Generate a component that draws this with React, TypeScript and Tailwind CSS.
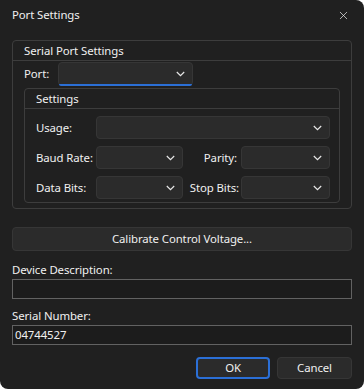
import { X } from "lucide-react";

function Chevron() {
  return (
    <svg width="9" height="6" viewBox="0 0 9 6" className="shrink-0">
      <path d="M0.8 1 L4.5 4.6 L8.2 1" fill="none" stroke="#e8e8e8" strokeWidth="1.2" />
    </svg>
  );
}

function Combo({ className, focused }: { className: string; focused?: boolean }) {
  return (
    <div
      className={
        "relative flex items-center justify-end pr-[7px] rounded-[4px] border border-[#363636] bg-[#2b2b2b] " +
        className
      }
    >
      <Chevron />
      {focused && (
        <div className="absolute left-0 right-0 -bottom-px h-[2px] rounded-b-[4px] bg-[#2b6fd6]" />
      )}
    </div>
  );
}

export default function App() {
  return (
    <div className="w-[364px] h-[389px] bg-white">
      <div
        className="w-[364px] h-[389px] bg-[#202020] rounded-tr-lg rounded-b-lg text-[11.4px] tracking-[-0.1px] text-[#f0f0f0] flex flex-col whitespace-nowrap"
        style={{ fontFamily: '"Noto Sans", "Open Sans", sans-serif' }}
      >
        {/* title bar */}
        <div className="h-[29px] flex items-center justify-between pl-3 pr-[14px] pt-px">
          <span>Port Settings</span>
          <X size={13} strokeWidth={1.3} className="text-[#f0f0f0]" />
        </div>

        <div className="px-3 flex flex-col">
          {/* Serial Port Settings group */}
          <div className="mt-[11px] border border-[#3d3d3d] rounded-[4px] pb-[5px]">
            <div className="h-[20px] border-b border-[#3d3d3d] pl-[11px] flex items-center">
              Serial Port Settings
            </div>
            <div className="flex items-center h-[26px] pl-[11px]">
              <span className="w-[34px] shrink-0">Port:</span>
              <Combo className="w-[135px] h-[24px] shrink-0" focused />
            </div>
            <div className="mt-px mx-[11px] border border-[#3d3d3d] rounded-[4px] pb-[3px]">
              <div className="h-[20px] border-b border-[#3d3d3d] pl-[11px] flex items-center">
                Settings
              </div>
              <div className="flex flex-col gap-[7px] pt-[7px] pl-[11px] pr-[9px]">
                <div className="flex items-center">
                  <span className="w-[60px] shrink-0">Usage:</span>
                  <Combo className="flex-1 h-[23px]" />
                </div>
                <div className="flex items-center">
                  <span className="w-[60px] shrink-0">Baud Rate:</span>
                  <Combo className="w-[87px] h-[23px] shrink-0" />
                  <span className="w-[58px] shrink-0 text-right pr-[4px]">Parity:</span>
                  <Combo className="flex-1 h-[23px]" />
                </div>
                <div className="flex items-center">
                  <span className="w-[60px] shrink-0">Data Bits:</span>
                  <Combo className="w-[87px] h-[23px] shrink-0" />
                  <span className="w-[58px] shrink-0 text-right pr-[2px]">Stop Bits:</span>
                  <Combo className="flex-1 h-[23px]" />
                </div>
              </div>
            </div>
          </div>

          {/* Calibrate */}
          <button className="mt-[18px] h-[24px] rounded-[4px] border border-[#363636] bg-[#2b2b2b] text-[#f0f0f0]">
            Calibrate Control Voltage...
          </button>

          <div className="mt-[11px] h-[16px] leading-[16px]">Device Description:</div>
          <div className="mt-[1px] h-[20px] border border-[#626262] bg-[#1c1c1c]" />

          <div className="mt-[9px] h-[16px] leading-[16px]">Serial Number:</div>
          <div className="mt-[1px] h-[20px] border border-[#626262] bg-[#1c1c1c] flex items-center pl-[2px]">
            04744527
          </div>

          <div className="mt-[12px] flex justify-end gap-[7px]">
            <button className="w-[74px] h-[22px] rounded-[4px] border-2 border-[#2b6fd6] bg-[#2b2b2b] text-[#f0f0f0]">
              OK
            </button>
            <button className="w-[75px] h-[22px] rounded-[4px] border border-[#363636] bg-[#2b2b2b] text-[#f0f0f0]">
              Cancel
            </button>
          </div>
        </div>
      </div>
    </div>
  );
}
